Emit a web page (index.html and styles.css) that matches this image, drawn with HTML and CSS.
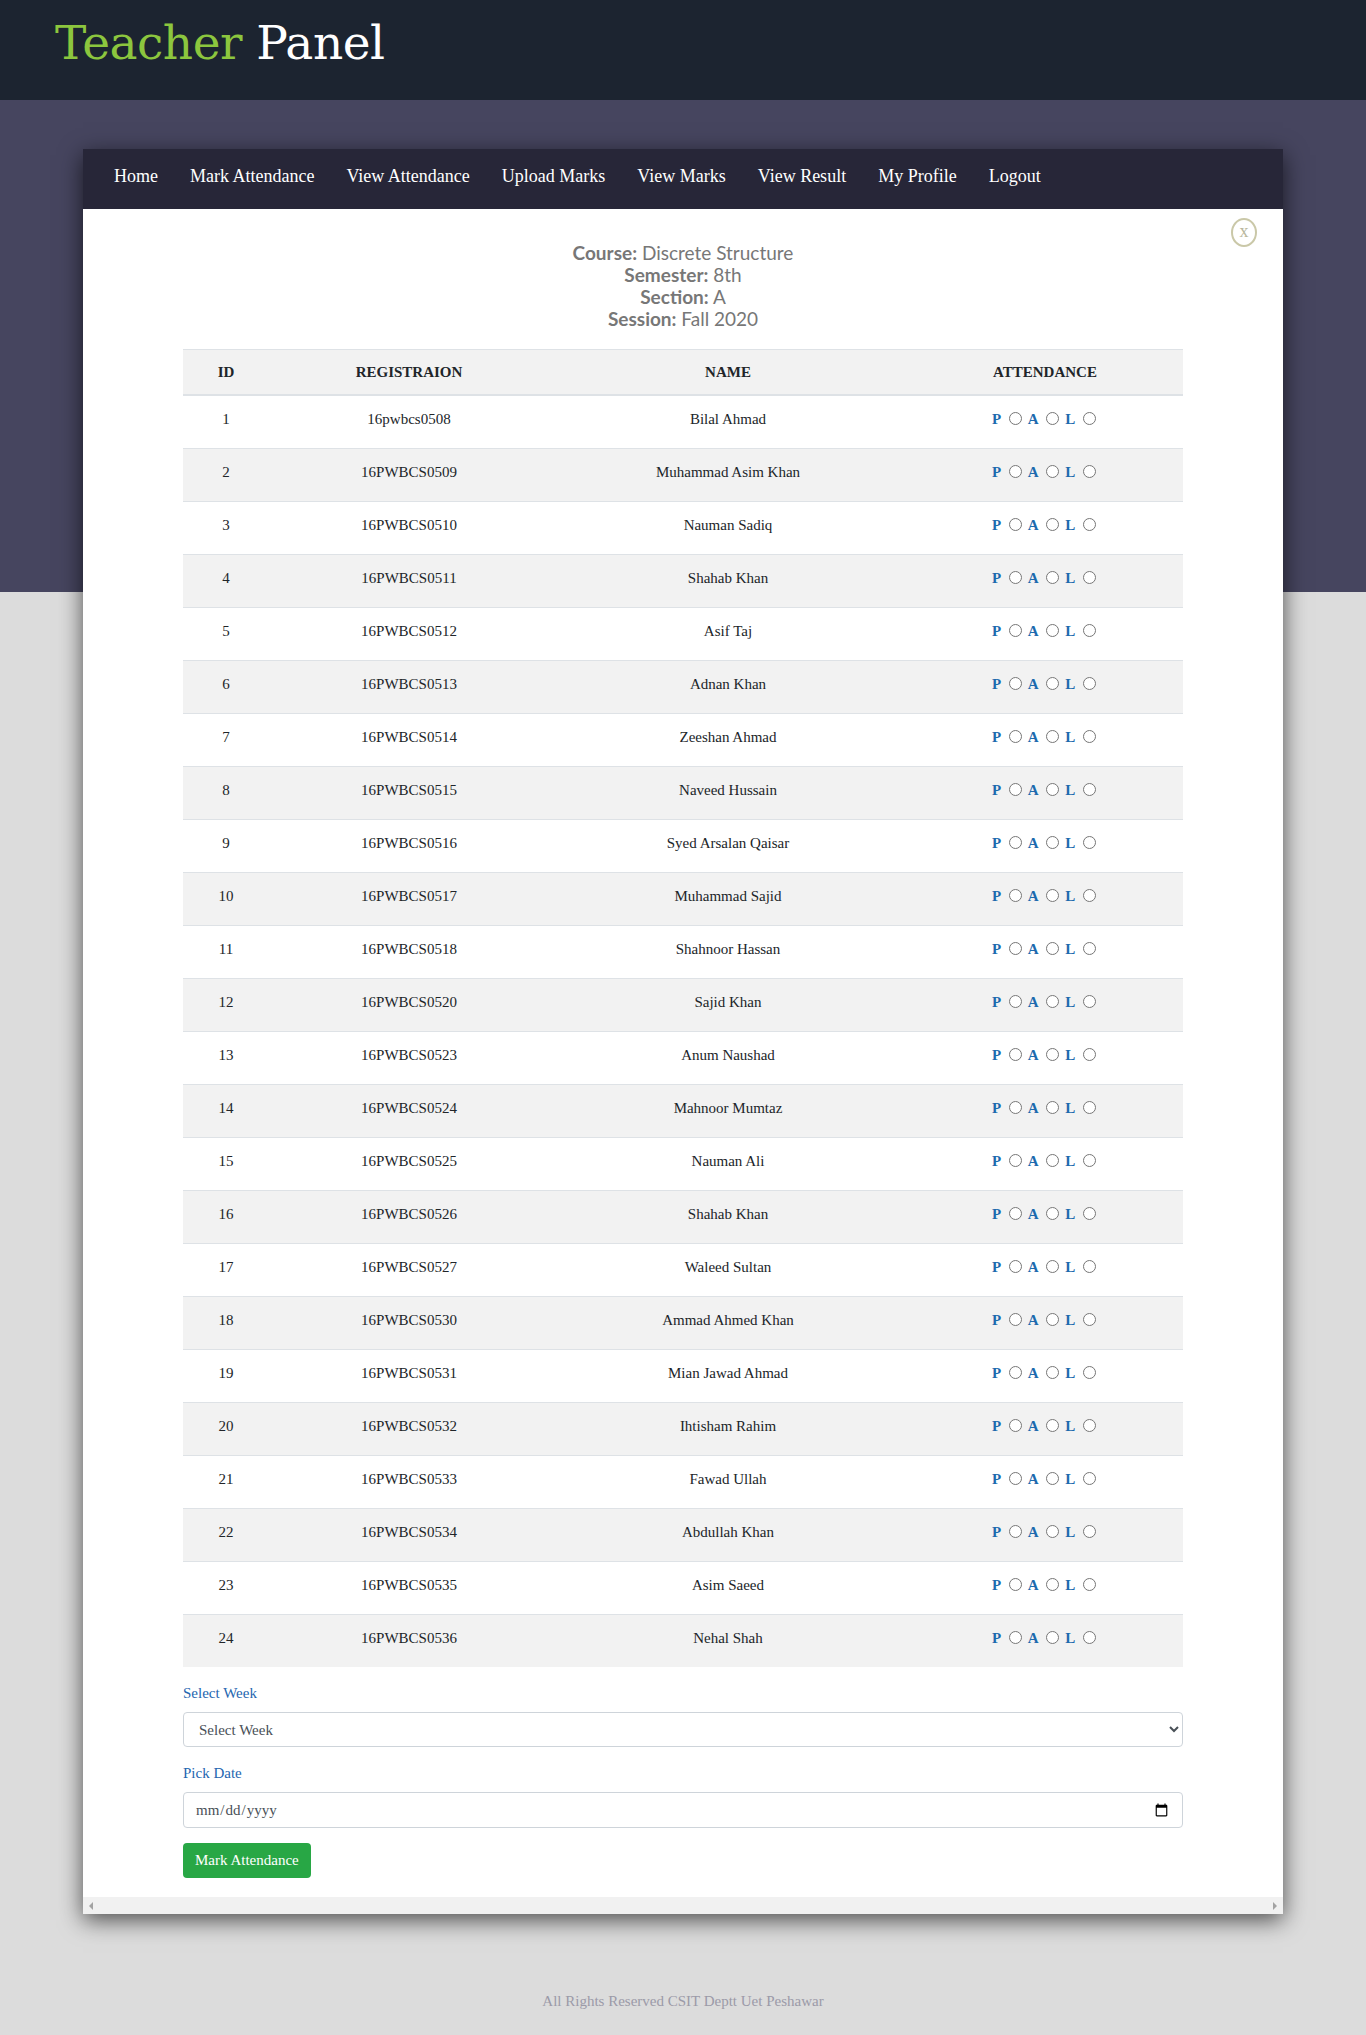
FILE: index.html
```html
<!DOCTYPE html>
<html>
<head>
<meta charset="utf-8">
<title>Teacher Panel</title>
<link rel="stylesheet" href="styles.css">
</head>
<body>
<header class="topbar">
  <h1 class="brand"><span class="brand-green">Teacher</span> Panel</h1>
</header>
<main class="stage">
  <div class="card">
    <nav class="nav">
      <a href="#">Home</a>
      <a href="#">Mark Attendance</a>
      <a href="#">View Attendance</a>
      <a href="#">Upload Marks</a>
      <a href="#">View Marks</a>
      <a href="#">View Result</a>
      <a href="#">My Profile</a>
      <a href="#">Logout</a>
    </nav>
    <div class="card-body">
      <span class="close">x</span>
      <div class="info">
        <div><b>Course:</b> Discrete Structure</div>
        <div><b>Semester:</b> 8th</div>
        <div><b>Section:</b> A</div>
        <div><b>Session:</b> Fall 2020</div>
      </div>
      <table class="att">
        <colgroup><col class="c1"><col class="c2"><col class="c3"><col class="c4"></colgroup>
        <thead>
          <tr><th>ID</th><th>REGISTRAION</th><th>NAME</th><th>ATTENDANCE</th></tr>
        </thead>
        <tbody id="rows"></tbody>
      </table>
      <form class="form">
        <label class="lbl">Select Week</label>
        <select class="ctl sel"><option>Select Week</option></select>
        <label class="lbl">Pick Date</label>
        <input class="ctl date" type="date">
        <button type="button" class="btn">Mark Attendance</button>
      </form>
    </div>
    <div class="hscroll"><span class="arr-l"></span><span class="arr-r"></span></div>
  </div>
</main>
<footer class="foot">All Rights Reserved CSIT Deptt Uet Peshawar</footer>
<script src="app.js"></script>
</body>
</html>
```

FILE: app.js
```js
var data = [
["1","16pwbcs0508","Bilal Ahmad"],
["2","16PWBCS0509","Muhammad Asim Khan"],
["3","16PWBCS0510","Nauman Sadiq"],
["4","16PWBCS0511","Shahab Khan"],
["5","16PWBCS0512","Asif Taj"],
["6","16PWBCS0513","Adnan Khan"],
["7","16PWBCS0514","Zeeshan Ahmad"],
["8","16PWBCS0515","Naveed Hussain"],
["9","16PWBCS0516","Syed Arsalan Qaisar"],
["10","16PWBCS0517","Muhammad Sajid"],
["11","16PWBCS0518","Shahnoor Hassan"],
["12","16PWBCS0520","Sajid Khan"],
["13","16PWBCS0523","Anum Naushad"],
["14","16PWBCS0524","Mahnoor Mumtaz"],
["15","16PWBCS0525","Nauman Ali"],
["16","16PWBCS0526","Shahab Khan"],
["17","16PWBCS0527","Waleed Sultan"],
["18","16PWBCS0530","Ammad Ahmed Khan"],
["19","16PWBCS0531","Mian Jawad Ahmad"],
["20","16PWBCS0532","Ihtisham Rahim"],
["21","16PWBCS0533","Fawad Ullah"],
["22","16PWBCS0534","Abdullah Khan"],
["23","16PWBCS0535","Asim Saeed"],
["24","16PWBCS0536","Nehal Shah"]
];
var tb = document.getElementById("rows");
var html = "";
data.forEach(function (r, i) {
  var n = "a" + i;
  html += "<tr><td>" + r[0] + "</td><td>" + r[1] + "</td><td>" + r[2] + "</td>" +
    "<td><b class='k'>P</b> <input type='radio' name='" + n + "'> <b class='k'>A</b> <input type='radio' name='" + n + "'> <b class='k'>L</b> <input type='radio' name='" + n + "'></td></tr>";
});
tb.innerHTML = html;
```

FILE: styles.css
```css
html, body { margin: 0; padding: 0; }
body {
  background: #dcdcdc;
  font-family: "Liberation Serif", "Times New Roman", serif;
  font-size: 15px;
  color: #212529;
}
.topbar {
  height: 100px;
  background: #1c2430;
  box-sizing: border-box;
  padding-left: 55px;
}
.brand {
  margin: 0;
  font-family: "DejaVu Serif", serif;
  font-weight: normal;
  font-size: 47px;
  line-height: 86px;
  letter-spacing: -0.5px;
  color: #ffffff;
}
.brand-green { color: #8cc63e; }
.stage {
  background: linear-gradient(#46455f 0, #46455f 492px, #dcdcdc 492px);
  padding-top: 49px;
}
.card {
  width: 1200px;
  margin-left: 83px;
  background: #fff;
  box-shadow: 0 6px 22px rgba(0, 0, 0, 0.65);
}
.nav {
  height: 60px;
  background: #272638;
  padding-left: 15px;
  display: flex;
  align-items: flex-start;
}
.nav a {
  color: #fff;
  text-decoration: none;
  font-size: 18px;
  padding: 0 16px;
  line-height: 54px;
}
.card-body {
  position: relative;
  width: 1000px;
  margin: 0 auto;
  padding-top: 33px;
  padding-bottom: 19px;
}
.close {
  position: absolute;
  right: -74px;
  top: 9px;
  width: 22px;
  height: 25px;
  border: 2px solid #cac8a8;
  border-radius: 50%;
  color: #b9b79c;
  font-size: 18px;
  line-height: 22px;
  text-align: center;
}
.info {
  text-align: center;
  font-family: "Lato", "Noto Sans", sans-serif;
  font-size: 19px;
  line-height: 22px;
  color: #777777;
  margin-bottom: 19px;
}
.info b { font-weight: 700; }
.att {
  width: 1000px;
  border-collapse: collapse;
  table-layout: fixed;
  text-align: center;
}
.c1 { width: 86px; }
.c2 { width: 280px; }
.c3 { width: 358px; }
.c4 { width: 276px; }
.att th {
  font-size: 15px;
  font-weight: bold;
  height: 44px;
  padding: 0;
  background: #f2f2f2;
  border-top: 1px solid #dee2e6;
  border-bottom: 2px solid #dee2e6;
  vertical-align: middle;
}
.att td {
  height: 46px;
  padding: 0 0 6px 0;
  border-top: 1px solid #dee2e6;
  vertical-align: middle;
}
.att tbody tr:nth-child(even) td { background: #f2f2f2; }
.k { color: #1d6aae; font-weight: bold; }
.att input[type=radio] { margin: 0 2px 0 4px; vertical-align: -1px; }
.form {
  display: flex;
  flex-direction: column;
  align-items: flex-start;
  padding-top: 15px;
}
.lbl {
  color: #2566b0;
  font-size: 15px;
  line-height: 22px;
  margin-bottom: 8px;
}
.ctl {
  box-sizing: border-box;
  width: 1000px;
  height: 35px;
  border: 1px solid #ced4da;
  border-radius: 4px;
  background: #fff;
  font-family: "Liberation Serif", serif;
  font-size: 15px;
  color: #495057;
  margin-bottom: 15px;
}
.sel { padding: 0 11px; }
.date { padding: 0 11px; height: 36px; }
.btn {
  background: #28a745;
  color: #fff;
  border: 0;
  border-radius: 4px;
  font-family: "Liberation Serif", serif;
  font-size: 15px;
  height: 35px;
  padding: 0 12px;
}
.hscroll {
  height: 17px;
  background: #f1f1f1;
  display: flex;
  justify-content: space-between;
  align-items: center;
  padding: 0 6px;
}
.arr-l, .arr-r { width: 0; height: 0; border-top: 4px solid transparent; border-bottom: 4px solid transparent; }
.arr-l { border-right: 4px solid #a3a3a3; }
.arr-r { border-left: 4px solid #a3a3a3; }
.foot {
  text-align: center;
  color: #9b9aa8;
  font-size: 15px;
  padding-top: 79px;
  height: 45px;
}
```
